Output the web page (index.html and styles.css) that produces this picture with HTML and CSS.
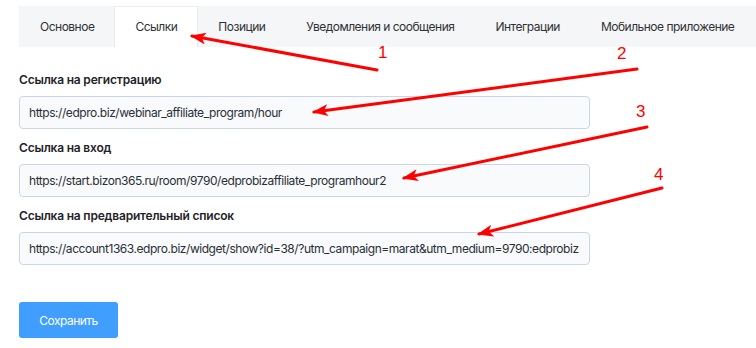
FILE: index.html
```html
<!DOCTYPE html>
<html>
	<head>
		<meta charset="utf-8" />
		<title>Ссылки</title>
		<link rel="stylesheet" href="styles.css">
	</head>
	<body>
		<div class="page">
			<div class="tabs">
				<div class="tab">Основное</div>
				<div class="tab active">Ссылки</div>
				<div class="tab">Позиции</div>
				<div class="tab">Уведомления и сообщения</div>
				<div class="tab">Интеграции</div>
				<div class="tab">Мобильное приложение</div>
			</div>

			<div class="form">
				<div class="field">
					<label class="label">Ссылка на регистрацию</label>
					<input class="input" type="text" value="https://edpro.biz/webinar_affiliate_program/hour"/>
				</div>
				<div class="field">
					<label class="label">Ссылка на вход</label>
					<input class="input" type="text" value="https://start.bizon365.ru/room/9790/edprobizaffiliate_programhour2"/>
				</div>
				<div class="field">
					<label class="label">Ссылка на предварительный список</label>
					<input class="input" type="text" value="https://account1363.edpro.biz/widget/show?id=38/?utm_campaign=marat&amp;utm_medium=9790:edprobiz"/>
				</div>
				<button class="save" type="button">Сохранить</button>
			</div>
		</div>

		<!-- стрелки поверх скриншота -->
		<svg class="notes" width="756" height="348" viewBox="0 0 756 348">
			<defs>
				<marker id="head" markerUnits="userSpaceOnUse" markerWidth="16" markerHeight="12" refX="14" refY="6" orient="auto">
					<path d="M0,0 L16,6 L0,12 L4,6 Z" fill="#ff0000"/>
				</marker>
			</defs>
			<g stroke="#ff0000" stroke-width="3" stroke-linecap="round" fill="none">
				<line x1="377" y1="70" x2="192" y2="36" marker-end="url(#head)"/>
				<line x1="637" y1="69" x2="314" y2="112" marker-end="url(#head)"/>
				<line x1="647" y1="127" x2="404" y2="178" marker-end="url(#head)"/>
				<line x1="662" y1="188" x2="479" y2="234" marker-end="url(#head)"/>
			</g>
			<g class="num" fill="#ff0000">
				<text x="378" y="58">1</text>
				<text x="617" y="59">2</text>
				<text x="636" y="117">3</text>
				<text x="654" y="180">4</text>
			</g>
		</svg>
	</body>
</html>
```

FILE: styles.css
```css
body{
	margin:0;
	background:#ffffff;
	font-family:Inter, "Noto Sans", sans-serif;
	color:#1f2329;
	overflow:hidden;
}
.page{
	padding:6px 0 0 19px;
}
.tabs{
	display:flex;
	height:41px;
	background-color:#f5f6f8;
	width:760px;
	overflow:hidden;
}
.tab{
	padding:0 20px;
	font-size:12px;
	letter-spacing:-0.5px;
	line-height:41px;
	color:#303133;
	white-space:nowrap;
	border-left:1px solid transparent;
	border-right:1px solid transparent;
	margin-left:-1px;
}
.tab:first-child{
	margin-left:0;
}
.tab.active{
	background-color:#ffffff;
	border-color:#e8eaee;
	border-top:1px solid #eceef2;
	line-height:40px;
}
.form{
	padding-top:23px;
	width:571px;
}
.field{
	display:flex;
	flex-direction:column;
	gap:6px;
	margin-bottom:9px;
}
.label{
	font-size:12px;
	font-weight:600;
	letter-spacing:-0.2px;
	line-height:20px;
	color:#1f2329;
}
.input{
	height:33px;
	box-sizing:border-box;
	border:1px solid #c9d6e6;
	border-radius:4px;
	background-color:#f8fafc;
	outline:none;/* без рамки фокуса */
	padding:0 9px;
	font-family:Inter, "Noto Sans", sans-serif;
	font-size:12px;
	letter-spacing:-0.45px;
	color:#2a2f36;
}
.save{
	margin-top:28px;
	height:36px;
	width:99px;
	border:0;
	border-radius:3px;
	background-color:#409eff;
	color:#ffffff;
	font-family:Inter, "Noto Sans", sans-serif;
	font-size:12px;
	letter-spacing:-0.5px;
}
.notes{
	position:absolute;
	left:0;
	top:0;
	pointer-events:none;
}
.num{
	font-family:"Liberation Sans", Arial, sans-serif;
	font-size:17px;
}
```
